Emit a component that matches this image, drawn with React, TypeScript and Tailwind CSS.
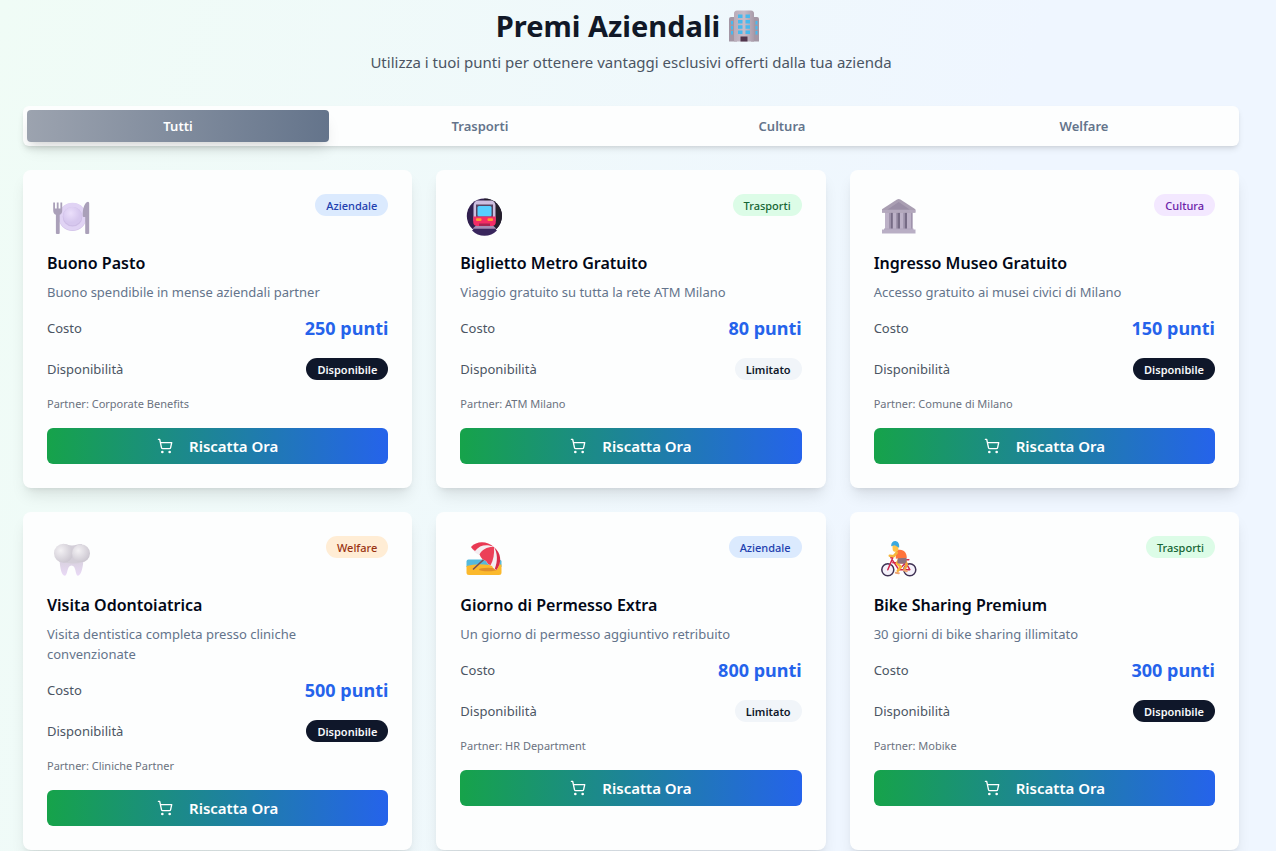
import React from "react";
import { ShoppingCart } from "lucide-react";

type Category = "Aziendale" | "Trasporti" | "Cultura" | "Welfare";

interface Reward {
  title: string;
  description: string;
  category: Category;
  cost: number;
  limited?: boolean;
  partner: string;
  Icon: () => React.ReactElement;
}

const categoryStyles: Record<Category, string> = {
  Aziendale: "bg-[#dbeafe] text-[#1e40af]",
  Trasporti: "bg-[#dcfce7] text-[#166534]",
  Cultura: "bg-[#f3e8ff] text-[#6b21a8]",
  Welfare: "bg-[#ffedd5] text-[#9a3412]",
};

function BuildingIcon() {
  return (
    <svg viewBox="0 0 32 32" className="size-8" aria-hidden="true">
      <defs>
        <linearGradient id="tower" x1="0" x2="1">
          <stop offset="0" stopColor="#b9acb9" />
          <stop offset="0.5" stopColor="#c6bbc8" />
          <stop offset="1" stopColor="#a99ba9" />
        </linearGradient>
      </defs>
      <path d="M1 9Q1 7 3 7H9v24.500H1zM31 9Q31 7 29 7H23v24.500h8z" fill="#a497a5" />
      <path d="M6 3.500Q6 .8 9 .5h14q3 .3 3 3v28H6z" fill="url(#tower)" />
      <g fill="#48b9ee">
        <path d="M10 4.500h4.500V8H10zM17.500 4.500H22V8h-4.500zM10 10h4.500v3.500H10zM17.500 10H22v3.500h-4.500zM10 15.200h4.500v3.500H10zM17.500 15.200H22v3.500h-4.500zM10 20.500h4.500V24H10zM17.500 20.500H22V24h-4.500z" />
        <path d="M3 11h2v3.500H3zM3 16h2v3.500H3zM3 21h2v3.500H3zM27.500 11h2v3.500h-2zM27.500 16h2v3.500h-2zM27.500 21h2v3.500h-2z" />
      </g>
      <path d="M12.500 26.500h7v5h-7z" fill="#51364d" />
    </svg>
  );
}

function PlateIcon() {
  return (
    <svg viewBox="0 0 40 40" className="size-10" aria-hidden="true">
      <defs>
        <radialGradient id="plate" cx="0.4" cy="0.35">
          <stop offset="0" stopColor="#ebdffb" />
          <stop offset="1" stopColor="#d6c7ee" />
        </radialGradient>
      </defs>
      <circle cx="21.500" cy="21" r="14" fill="#d2c3e8" />
      <circle cx="21.500" cy="20.500" r="13.800" fill="#e0d3f4" />
      <circle cx="21.500" cy="20.800" r="9.800" fill="#cdbce5" />
      <circle cx="21.500" cy="20" r="9.300" fill="url(#plate)" />
      <path transform="translate(1.200 1)" d="M1 5.500h1.800v6h1.800v-6h1.800v6h1.800v-6H10v8c0 2.200-.9 3.700-2.500 4.300V36.500q-2 1-3.800 0V17.800C2 17.200 1 15.700 1 13.500z" fill="#aaa0b9" />
      <path transform="translate(3.200 1)" d="M32.500 5.300c-2.500 2-4 6-4 13.200 0 1 .5 1.500 1.500 1.500h1v16.500q2 1 4 0V6.500c0-1.500-1-2.500-2.500-1.200z" fill="#aaa0b9" />
    </svg>
  );
}

function MetroIcon() {
  return (
    <svg viewBox="0 0 40 40" className="size-10" aria-hidden="true">
      <circle cx="20.400" cy="20" r="17.600" fill="#31204f" />
      <path d="M20.400 2.400a17.600 17.600 0 0 1 0 35.200z" fill="#241f2b" />
      <path d="m13 31-5 3.500a17.500 17.500 0 0 0 25 0L28 31z" fill="#39265d" />
      <path d="m12.500 29-4 3.800h24L28.500 29z" fill="#a58db5" />
      <path d="M9.500 10c0-3.500 2-5.500 5-5.500h12c3 0 5 2 5 5.500v15h-22z" fill="#cdbfe0" />
      <path d="M12 8.500h17V22H12z" fill="#574463" />
      <rect x="13.500" y="10" width="14" height="10.500" rx="1.500" fill="#55cfff" />
      <path d="M9.200 20.500h22.600V26c0 2.500-1.500 4-4 4H13.200c-2.500 0-4-1.500-4-4z" fill="#f32c65" />
      <rect x="12" y="22.300" width="5.500" height="2.800" rx="1" fill="#ff9b36" />
      <rect x="23.500" y="22.300" width="5.500" height="2.800" rx="1" fill="#ff9b36" />
      <path d="M15 27.500h11V30H15z" fill="#a72451" />
    </svg>
  );
}

function MuseumIcon() {
  return (
    <svg viewBox="0 0 40 40" className="size-10" aria-hidden="true">
      <path d="M7.500 16h26v18h-26z" fill="#766b85" />
      <path d="M7 16h5.500v18H7zM14.800 16h4.500v18h-4.500zM22 16h4.500v18H22zM29 16h5.500v18H29z" fill="#bcb1c7" />
      <path d="M11 16.500h1.500V33H11zM18 16.500h1.300V33H18zM25.200 16.500h1.300V33h-1.300zM33 16.500h1.500V33H33z" fill="#9f93ac" />
      <path d="M19 3.500q1.700-1 3.400 0l15 9.800v3.200H4v-3.200z" fill="#a99eb2" />
      <path d="m20.700 6 11 7.500h-22z" fill="#9a8ea6" />
      <path d="M4 14h33.400v2.700H4z" fill="#b3a8bd" />
      <path d="M6 32.500h29.500V35H6z" fill="#b1a4bd" />
      <path d="M4 33.500h33.500v4H4z" fill="#b9afc5" />
    </svg>
  );
}

function ToothIcon() {
  return (
    <svg viewBox="0 0 40 40" className="size-10" aria-hidden="true">
      <defs>
        <radialGradient id="crown" cx="0.35" cy="0.35" r="0.7">
          <stop offset="0" stopColor="#f3f1f4" />
          <stop offset="1" stopColor="#cbc6d0" />
        </radialGradient>
        <linearGradient id="roots" x2="0" y2="1">
          <stop offset="0.3" stopColor="#dcd3e4" />
          <stop offset="1" stopColor="#e9d9f6" />
        </linearGradient>
      </defs>
      <path d="M8.500 21c.5 9 2 16.500 5.200 16.700C17 38 15.500 27.500 20.500 27.500S24 38 27 37.700c3-.2 5-7.700 5.500-16.700z" fill="url(#roots)" />
      <path d="M11 6c4-.5 6 1.500 10 1.500S27 5.500 31 6v18q-5 2-10 1.500T11 24z" fill="#d3ced8" />
      <circle cx="12.500" cy="15.300" r="9.500" fill="url(#crown)" />
      <circle cx="30" cy="15.300" r="9" fill="url(#crown)" />
    </svg>
  );
}

function BeachIcon() {
  return (
    <svg viewBox="0 0 40 40" className="size-10" aria-hidden="true">
      <path d="M4.500 21.500h31q2 0 2 2V29h-35v-5.500q0-2 2-2z" fill="#55b9dc" />
      <path d="M2.500 28q9-2.500 18-1.500t17 0v8q0 2.500-2.500 2.500H5q-2.500 0-2.500-2.500z" fill="#fbb92d" />
      <ellipse cx="24" cy="31.500" rx="9" ry="1.800" fill="#df8f2b" />
      <path d="M24 17.500 9.500 31" stroke="#75505b" strokeWidth="1.600" strokeLinecap="round" />
      <path d="M7 9C13 2.500 23 3 30 9c7 6 8.500 15 2.500 23-2-.5-3.500-2-4.500-4-3-.5-5-2.500-6-5-3-1-5-3-6-6-4-1-7-3.500-9-8z" fill="#f4edf1" />
      <path d="M7 9C13 2.500 23 3 30 9c-7-3-14-2.500-19 4Q8.500 11.500 7 9z" fill="#e93953" />
      <path d="M15.500 16.500C18 11 24 8.500 30 9c.5 7-.5 13-3.500 18.300q-3-1-4.500-4.300-4.500-1.500-6.500-6.500z" fill="#ec3f58" />
      <path d="M30 9c7 6 8.500 15 2.500 23l-1.700-1.300C34 23 33.500 15 30 9z" fill="#d92c49" />
    </svg>
  );
}

function BikeIcon() {
  return (
    <svg viewBox="0 0 40 40" className="size-10" aria-hidden="true" fill="none" strokeLinecap="round" strokeLinejoin="round">
      <g transform="translate(0.800 1.700)">
        <circle cx="9" cy="30" r="6" fill="#f5f2fb" stroke="#3f3254" strokeWidth="1.500" />
        <circle cx="31" cy="30" r="6" fill="#f5f2fb" stroke="#3f3254" strokeWidth="1.500" />
        <path d="m9 30 5-12h-2m2 5h13l4 7H20l-6-9m13 2-7 7m6-10h4" stroke="#d2264b" strokeWidth="1.500" />
        <path d="m21 19-3 4.500 4 3.500-3 4" stroke="#fbb637" strokeWidth="2.600" />
        <path d="m26 20 2 5-2 4" stroke="#f3a13d" strokeWidth="2.600" />
        <path d="M19 17.500h8.500c1 3 0 6-2 6.500l-7-.5z" fill="#8d7180" />
        <path d="M17 10h4c5 0 7 4 7 8l-8 .5-3 .5z" fill="#ff743c" />
        <path d="m18 13-3 3.500-4-.5" stroke="#f5b63c" strokeWidth="2.600" />
        <path d="M13.500 5h6v5.500c-1.500 2-4.500 2-5.500 0z" fill="#ffc34a" />
        <path d="M12.300 6.500c0-3.800 2.500-5.500 5-5S20.800 5 20.300 8L16 5.500z" fill="#3ba9df" />
        <path d="m17 33 3 .5m5-3 3 1" stroke="#efa472" strokeWidth="2" />
      </g>
    </svg>
  );
}

const rewards: Reward[] = [
  { title: "Buono Pasto", description: "Buono spendibile in mense aziendali partner", category: "Aziendale", cost: 250, partner: "Corporate Benefits", Icon: PlateIcon },
  { title: "Biglietto Metro Gratuito", description: "Viaggio gratuito su tutta la rete ATM Milano", category: "Trasporti", cost: 80, limited: true, partner: "ATM Milano", Icon: MetroIcon },
  { title: "Ingresso Museo Gratuito", description: "Accesso gratuito ai musei civici di Milano", category: "Cultura", cost: 150, partner: "Comune di Milano", Icon: MuseumIcon },
  { title: "Visita Odontoiatrica", description: "Visita dentistica completa presso cliniche convenzionate", category: "Welfare", cost: 500, partner: "Cliniche Partner", Icon: ToothIcon },
  { title: "Giorno di Permesso Extra", description: "Un giorno di permesso aggiuntivo retribuito", category: "Aziendale", cost: 800, limited: true, partner: "HR Department", Icon: BeachIcon },
  { title: "Bike Sharing Premium", description: "30 giorni di bike sharing illimitato", category: "Trasporti", cost: 300, partner: "Mobike", Icon: BikeIcon },
];

const tabs = ["Tutti", "Trasporti", "Cultura", "Welfare"];

function Badge({ className, children }: { className: string; children: React.ReactNode }) {
  return (
    <span className={`flex h-[22px] items-center rounded-full px-[11px] pt-px text-[11px] leading-4 ${className}`}>
      {children}
    </span>
  );
}

function RewardCard({ title, description, category, cost, limited, partner, Icon }: Reward) {
  return (
    <article className="rounded-lg bg-[#fdfefe] p-6 shadow-lg">
      <div className="flex h-[55px] items-start justify-between">
        <div className="pt-0.5 pl-1">
          <Icon />
        </div>
        <Badge className={`font-medium ${categoryStyles[category]}`}>{category}</Badge>
      </div>
      <h2 className="text-[16px] leading-7 font-semibold text-[#020817]">{title}</h2>
      <p className="mt-[5px] pr-8 text-[13px] leading-5 text-[#64748b]">{description}</p>
      <div className="mt-3 flex h-7 items-center justify-between">
        <span className="text-[13px] leading-5 text-[#4b5563]">Costo</span>
        <span className="text-[18px] leading-7 font-bold text-[#2563eb]">{cost} punti</span>
      </div>
      <div className="mt-4 flex h-[22px] items-center justify-between">
        <span className="text-[13px] leading-5 text-[#4b5563]">Disponibilità</span>
        <Badge className={limited ? "bg-[#f1f5f9] font-semibold text-[#0f172a]" : "bg-[#0f172a] font-semibold text-[#f8fafc]"}>
          {limited ? "Limitato" : "Disponibile"}
        </Badge>
      </div>
      <p className="mt-4 text-[11px] leading-4 text-[#6b7280]">Partner: {partner}</p>
      <button
        type="button"
        className="mt-4 flex h-9 w-full items-center justify-center gap-4 rounded-md bg-[linear-gradient(to_right,#16a34a,#2563eb)] text-[15px] font-semibold text-white"
      >
        <ShoppingCart className="size-4" strokeWidth={2} />
        Riscatta Ora
      </button>
    </article>
  );
}

export default function App() {
  const [active, setActive] = React.useState("Tutti");
  return (
    <div className="min-h-screen bg-[linear-gradient(105deg,#f0fcf6,#eff6ff_70%)] pt-1.5 pr-[37px] pl-[23px] font-['Noto_Sans',sans-serif]">
      <header className="text-center">
        <h1 className="flex h-10 items-center justify-center gap-2 pr-1.5 text-[29px] font-bold text-[#111827]">
          Premi Aziendali <BuildingIcon />
        </h1>
        <p className="mt-1 text-[15px] leading-6 text-[#4b5563]">
          Utilizza i tuoi punti per ottenere vantaggi esclusivi offerti dalla tua azienda
        </p>
      </header>
      <div role="tablist" className="mt-8 grid h-10 grid-cols-4 rounded-md bg-[#fdfefe] p-1 shadow-md">
        {tabs.map((tab) => (
          <button
            key={tab}
            type="button"
            role="tab"
            aria-selected={tab === active}
            onClick={() => setActive(tab)}
            className={`rounded-sm text-[13px] leading-5 font-semibold ${
              tab === active ? "bg-[linear-gradient(to_right,#9ca3af,#64748b)] text-white shadow-lg" : "text-[#64748b]"
            }`}
          >
            {tab}
          </button>
        ))}
      </div>
      <main className="mt-6 grid grid-cols-3 gap-6">
        {rewards
          .filter((r) => active === "Tutti" || r.category === active)
          .map((r) => (
            <RewardCard key={r.title} {...r} />
          ))}
      </main>
    </div>
  );
}
